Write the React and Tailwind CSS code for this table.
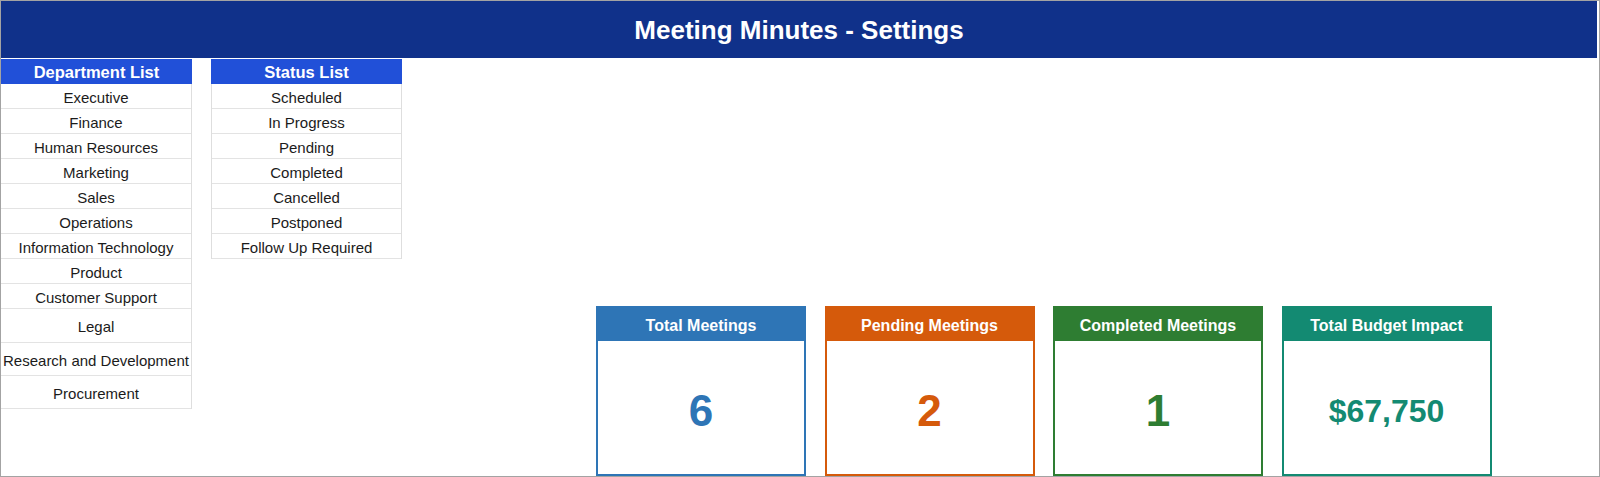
import React from "react";

const departments = [
  { name: "Executive", h: "h-[25px]" },
  { name: "Finance", h: "h-[25px]" },
  { name: "Human Resources", h: "h-[25px]" },
  { name: "Marketing", h: "h-[25px]" },
  { name: "Sales", h: "h-[25px]" },
  { name: "Operations", h: "h-[25px]" },
  { name: "Information Technology", h: "h-[25px]" },
  { name: "Product", h: "h-[25px]" },
  { name: "Customer Support", h: "h-[25px]" },
  { name: "Legal", h: "h-[34px]" },
  { name: "Research and Development", h: "h-[33px]" },
  { name: "Procurement", h: "h-[33px]" },
];

const statuses = [
  "Scheduled",
  "In Progress",
  "Pending",
  "Completed",
  "Cancelled",
  "Postponed",
  "Follow Up Required",
];

const cards = [
  {
    title: "Total Meetings",
    value: "6",
    border: "border-[#2e75b6]",
    bg: "bg-[#2e75b6]",
    text: "text-[#2e75b6]",
    size: "text-[44px]",
  },
  {
    title: "Pending Meetings",
    value: "2",
    border: "border-[#d55a0b]",
    bg: "bg-[#d55a0b]",
    text: "text-[#d55a0b]",
    size: "text-[44px]",
  },
  {
    title: "Completed Meetings",
    value: "1",
    border: "border-[#2e7d32]",
    bg: "bg-[#2e7d32]",
    text: "text-[#2e7d32]",
    size: "text-[44px]",
  },
  {
    title: "Total Budget Impact",
    value: "$67,750",
    border: "border-[#138a72]",
    bg: "bg-[#138a72]",
    text: "text-[#138a72]",
    size: "text-[32px]",
  },
];

function ListHeader({ children }) {
  return (
    <div className="h-[25px] bg-[#2150d8] text-white font-bold text-[16.5px] flex items-center justify-center leading-none pt-[1px]">
      {children}
    </div>
  );
}

export default function App() {
  return (
    <div
      className="w-[1600px] h-[477px] border border-[#a3a3a3] bg-white flex flex-col overflow-hidden text-[#1b1b1b]"
      style={{ fontFamily: '"Liberation Sans", Arial, sans-serif' }}
    >
      <div className="h-[57px] shrink-0 mr-[2px] bg-[#10318a] flex items-center justify-center">
        <h1 className="text-white font-bold text-[26px] leading-none pt-[1px]">
          Meeting Minutes - Settings
        </h1>
      </div>

      <div className="flex flex-1 min-h-0 pt-[1px]">
        <div className="w-[191px] shrink-0 self-start">
          <ListHeader>Department List</ListHeader>
          <div className="border-r border-[#dedede]">
            {departments.map((d) => (
              <div
                key={d.name}
                className={`${d.h} border-b border-[#e3e3e3] flex items-center justify-center text-[15px] leading-none pt-[2px]`}
              >
                {d.name}
              </div>
            ))}
          </div>
        </div>

        <div className="w-[191px] shrink-0 ml-[19px] self-start">
          <ListHeader>Status List</ListHeader>
          <div className="border-x border-[#dedede]">
            {statuses.map((s) => (
              <div
                key={s}
                className="h-[25px] border-b border-[#e3e3e3] flex items-center justify-center text-[15px] leading-none pt-[2px]"
              >
                {s}
              </div>
            ))}
          </div>
        </div>

        <div className="ml-[194px] self-end flex gap-[18.5px]">
          {cards.map((c) => (
            <div
              key={c.title}
              className={`w-[210px] h-[170px] border-2 ${c.border} flex flex-col`}
            >
              <div
                className={`h-[33px] shrink-0 ${c.bg} text-white font-bold text-[16px] flex items-center justify-center leading-none pt-[2px]`}
              >
                {c.title}
              </div>
              <div
                className={`flex-1 flex items-center justify-center font-bold ${c.size} ${c.text} leading-none pt-[6px]`}
              >
                {c.value}
              </div>
            </div>
          ))}
        </div>
      </div>
    </div>
  );
}
